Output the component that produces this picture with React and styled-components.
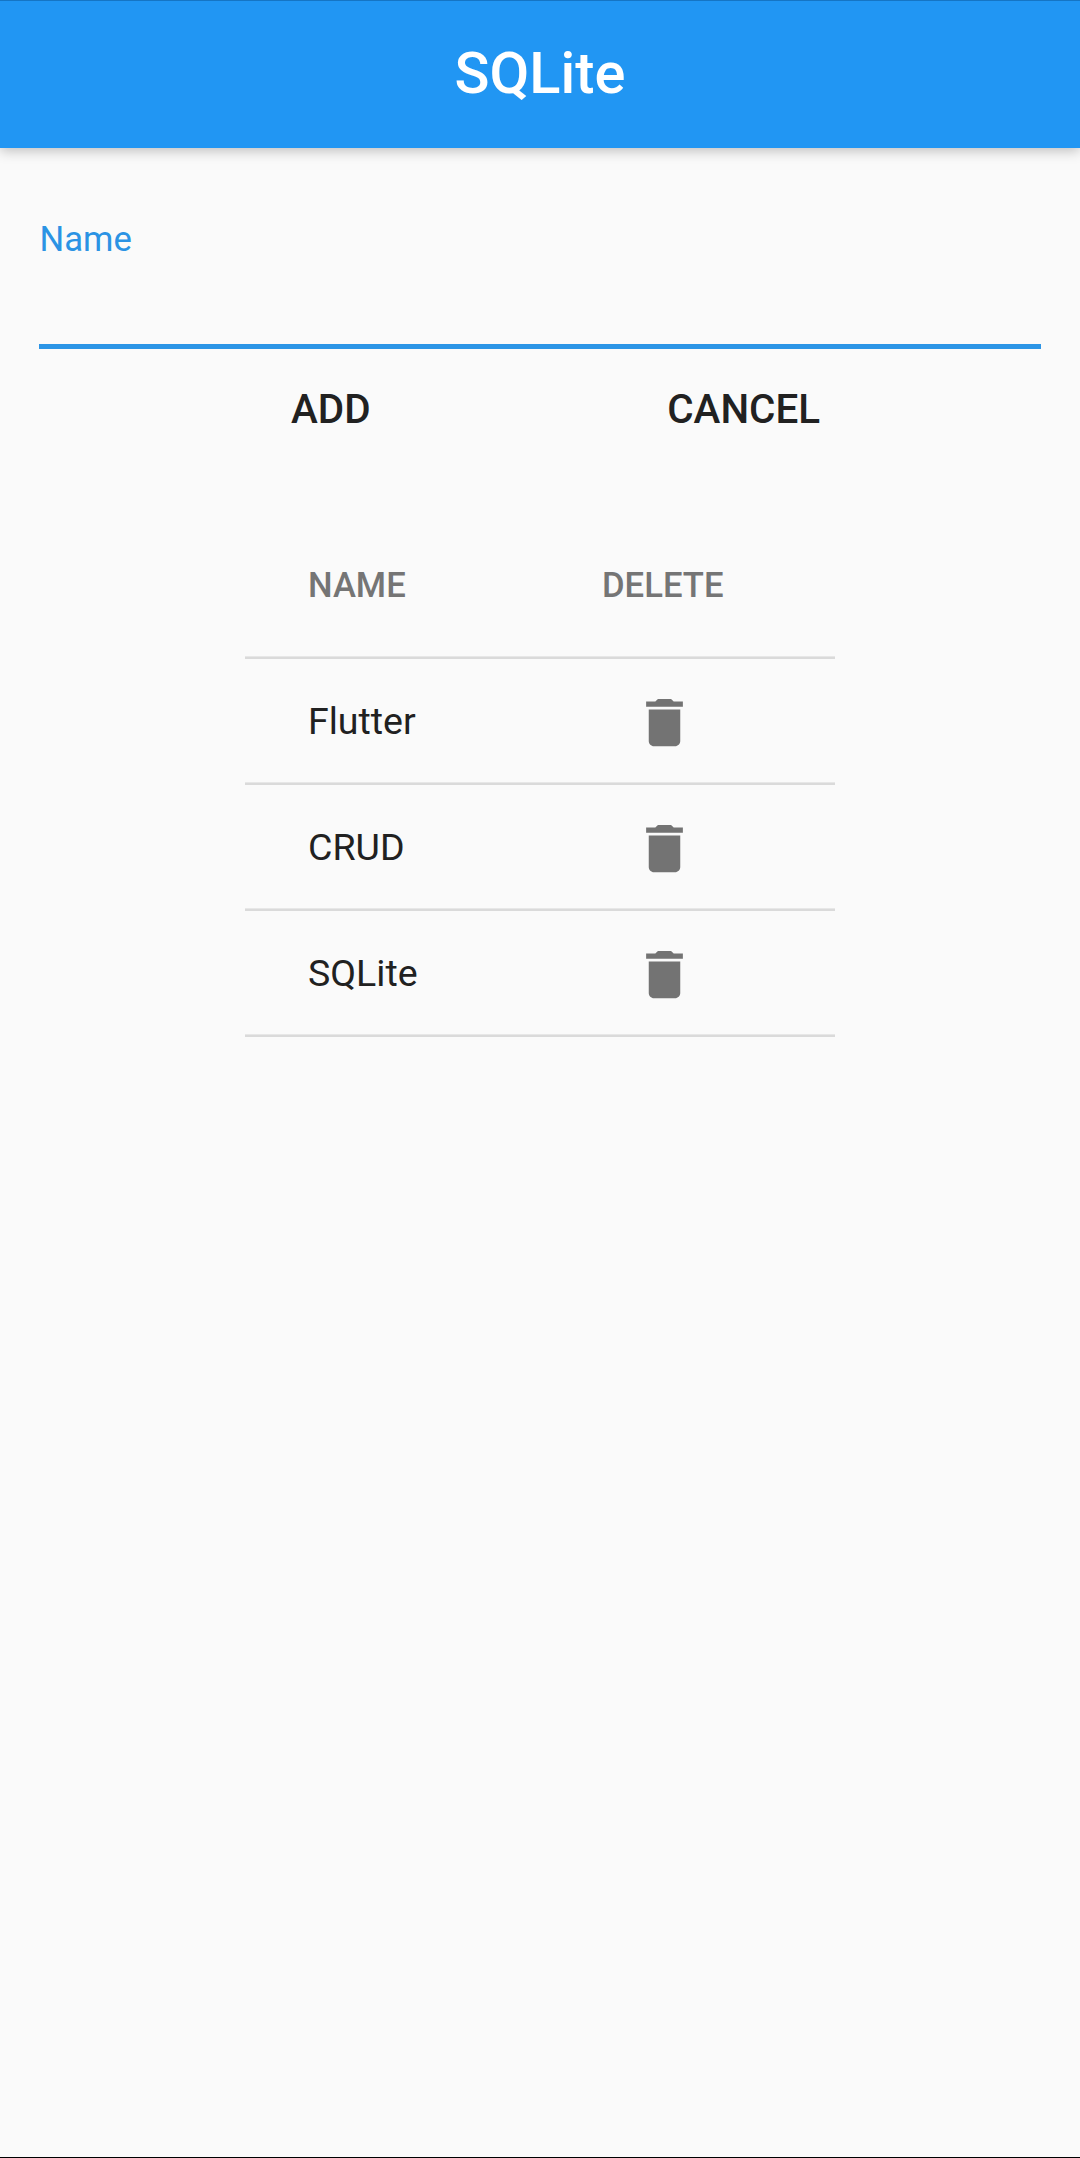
import React from 'react';
import styled, { createGlobalStyle } from 'styled-components';

const Global = createGlobalStyle`
  * { box-sizing: border-box; }
  body {
    margin: 0;
    background: #fafafa;
    color: #212121;
    font-family: Roboto, "Noto Sans", sans-serif;
  }
`;

const Page = styled.div`
  height: 2158px;
  display: flex;
  flex-direction: column;
  background: #fafafa;
  border-bottom: 1px solid #000;
`;

const AppBar = styled.header`
  height: 148px;
  flex: none;
  display: flex;
  align-items: center;
  justify-content: center;
  padding-bottom: 3px;
  background: #2196f3;
  border-top: 1px solid #1575c4;
  box-shadow: 0 3px 12px rgba(0, 0, 0, 0.24);
`;

const Title = styled.h1`
  margin: 0;
  color: #fff;
  font-size: 57.75px;
  font-weight: 500;
  line-height: 68px;
`;

const Form = styled.form`
  padding: 71px 39px 0;
  display: flex;
  flex-direction: column;
`;

const Label = styled.label`
  padding-left: 0.5px;
  color: #2b93e4;
  font-size: 34.65px;
  line-height: 40px;
`;

const Input = styled.input`
  height: 90px;
  padding: 0;
  border: 0;
  border-bottom: 5px solid #2c95e6;
  border-radius: 0;
  background: transparent;
  outline: none;
  font: 42px Roboto, sans-serif;
`;

const Actions = styled.div`
  display: flex;
  justify-content: space-evenly;
  padding-top: 13px;
`;

const Button = styled.button`
  width: ${p => p.$width}px;
  height: 96px;
  padding: 0;
  border: 0;
  background: none;
  color: #212121;
  font: 500 40.425px/48px Roboto, sans-serif;
`;

const Table = styled.div`
  width: 590px;
  margin: 54px auto 0;
`;

const Row = styled.div`
  display: grid;
  grid-template-columns: 357px 1fr;
  align-items: center;
  height: 126px;
  border-bottom: 2px solid #dadada;
  box-shadow: inset 0 -1px 0 #e7e7e7;
`;

const HeadRow = styled(Row)`
  height: 147px;
  padding-top: 1px;
  color: #757575;
  font-size: 34.65px;
  font-weight: 500;
  line-height: 40px;
`;

const NameCell = styled.div`
  padding-left: 63px;
`;

const ItemName = styled(NameCell)`
  font-size: 37.54px;
  line-height: 44px;
`;

const DeleteButton = styled.button`
  display: flex;
  justify-content: center;
  width: 125px;
  padding: 3px 0 0;
  border: 0;
  background: none;
`;

const Trash = styled.svg`
  width: 63px;
  height: 63px;
  fill: #737373;
`;

const names = ['Flutter', 'CRUD', 'SQLite'];

export default function App() {
  return (
    <Page>
      <Global />
      <AppBar>
        <Title>SQLite</Title>
      </AppBar>
      <Form>
        <Label htmlFor="name">Name</Label>
        <Input id="name" />
        <Actions>
          <Button type="button" $width={231}>ADD</Button>
          <Button type="button" $width={242}>CANCEL</Button>
        </Actions>
      </Form>
      <Table>
        <HeadRow>
          <NameCell>NAME</NameCell>
          <div>DELETE</div>
        </HeadRow>
        {names.map(name => (
          <Row key={name}>
            <ItemName>{name}</ItemName>
            <DeleteButton type="button" aria-label="Delete">
              <Trash viewBox="0 0 24 24">
                <path d="M6 19c0 1.100.9 2 2 2h8c1.100 0 2-.9 2-2V7H6v12zM19 4h-3.500l-1-1h-5l-1 1H5v2h14V4z" />
              </Trash>
            </DeleteButton>
          </Row>
        ))}
      </Table>
    </Page>
  );
}
